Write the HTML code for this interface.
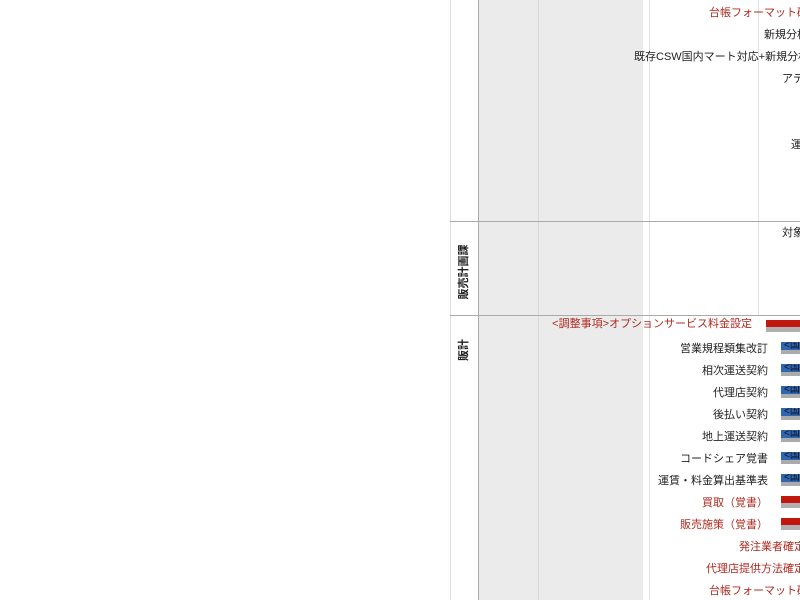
<!DOCTYPE html>
<html><head><meta charset="utf-8"><style>
body{margin:0;width:800px;height:600px;overflow:hidden;background:#fff;position:relative;font-family:"Liberation Sans","Noto Sans CJK JP",sans-serif;font-size:11px;color:#222}
.a{position:absolute}
.t{position:absolute;white-space:nowrap;line-height:14px}
.q{position:absolute;white-space:nowrap;line-height:14px;text-align:right;right:32px}
.r{color:#b02a20}
.v{position:absolute;white-space:nowrap;font-size:11px;font-weight:bold;color:#222;line-height:12px;transform:rotate(-90deg);transform-origin:center center;text-align:center}
.bb{position:absolute;left:781px;width:19px;height:12px;background:#ababab}
.bb i{position:absolute;left:0;top:0;width:19px;height:8px;background:#2f66b3;font-style:normal;font-size:10px;line-height:8px;color:#111;padding-left:3px;box-sizing:border-box;overflow:hidden}
.rb{position:absolute;width:34px;height:12px;background:#b0b0b0}
.rb i{position:absolute;left:0;top:0;right:0;height:7px;background:#c0170f}
</style></head><body>
<div class="a" style="left:450px;top:0;width:1px;height:600px;background:#ddd"></div>
<div class="a" style="left:478px;top:0;width:1px;height:600px;background:#aaa"></div>
<div class="a" style="left:479px;top:0;width:164px;height:600px;background:#ebebeb"></div>
<div class="a" style="left:538px;top:0;width:1px;height:600px;background:#d8d8d8"></div>
<div class="a" style="left:649px;top:0;width:1px;height:600px;background:#e2e2e2"></div>
<div class="a" style="left:758px;top:0;width:1px;height:315px;background:#e2e2e2"></div>
<div class="a" style="left:450px;top:221px;width:350px;height:1px;background:#aaa"></div>
<div class="a" style="left:450px;top:315px;width:350px;height:1px;background:#aaa"></div>
<div class="v" style="left:434px;top:266px;width:60px">販売計画課</div>
<div class="v" style="left:434px;top:344px;width:60px">販計</div>

<div class="t r" style="left:709px;top:6px">台帳フォーマット確定</div>
<div class="t" style="left:764px;top:28px">新規分析</div>
<div class="t" style="left:634px;top:50px">既存CSW国内マート対応+新規分析</div>
<div class="t" style="left:782px;top:72px">アテ</div>
<div class="t" style="left:791px;top:138px">運用</div>
<div class="t" style="left:782px;top:226px">対象</div>

<div class="q r" style="right:48px;top:317px">&lt;調整事項&gt;オプションサービス料金設定</div>
<div class="rb" style="left:766px;top:320px"><i></i></div>
<div class="q" style="top:342px">営業規程類集改訂</div><div class="bb" style="top:342px"><i>&lt;国</i></div>
<div class="q" style="top:364px">相次運送契約</div><div class="bb" style="top:364px"><i>&lt;国</i></div>
<div class="q" style="top:386px">代理店契約</div><div class="bb" style="top:386px"><i>&lt;国</i></div>
<div class="q" style="top:408px">後払い契約</div><div class="bb" style="top:408px"><i>&lt;国</i></div>
<div class="q" style="top:430px">地上運送契約</div><div class="bb" style="top:430px"><i>&lt;国</i></div>
<div class="q" style="top:452px">コードシェア覚書</div><div class="bb" style="top:452px"><i>&lt;国</i></div>
<div class="q" style="top:474px">運賃・料金算出基準表</div><div class="bb" style="top:474px"><i>&lt;国</i></div>
<div class="q r" style="top:496px">買取（覚書）</div><div class="rb" style="left:781px;top:496px"><i></i></div>
<div class="q r" style="top:518px">販売施策（覚書）</div><div class="rb" style="left:781px;top:518px"><i></i></div>
<div class="t r" style="left:739px;top:540px">発注業者確定</div>
<div class="t r" style="left:706px;top:562px">代理店提供方法確定</div>
<div class="t r" style="left:709px;top:584px">台帳フォーマット確定</div>
</body></html>
